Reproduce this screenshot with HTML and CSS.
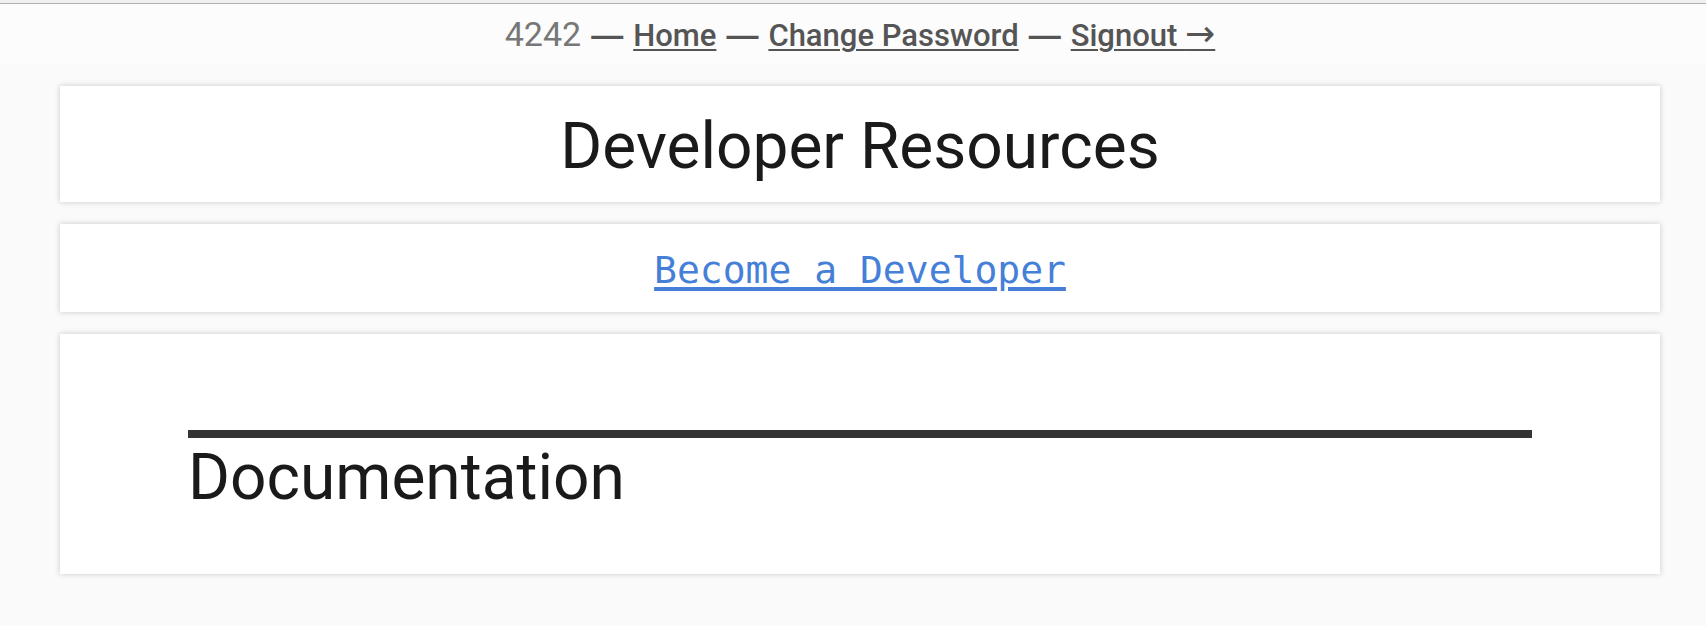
FILE: index.html
```html
<!DOCTYPE html>
<html lang="en">
<head>
<meta charset="utf-8">
<title>Developer Resources</title>
<link rel="stylesheet" href="styles.css">
</head>
<body>
<nav class="topbar">
  <span class="account">4242</span>
  <span class="dash">—</span>
  <a href="#">Home</a>
  <span class="dash">—</span>
  <a href="#">Change Password</a>
  <span class="dash">—</span>
  <a href="#">Signout <span class="arrow">→</span></a>
</nav>
<main class="page">
  <header class="card title-card">
    <h1 class="heading">Developer Resources</h1>
  </header>
  <section class="card action-card">
    <a class="cta" href="#">Become a Developer</a>
  </section>
  <section class="card docs-card">
    <h2 class="heading docs-heading">Documentation</h2>
  </section>
</main>
</body>
</html>
```
FILE: styles.css
```css
* { box-sizing: border-box; }
body {
  margin: 0;
  background: #fafafa;
  color: #1a1a1a;
  font-family: Roboto, "Liberation Sans", sans-serif;
}
.topbar {
  position: relative;
  display: flex;
  flex-wrap: wrap;
  align-items: baseline;
  justify-content: center;
  gap: 0 10px;
  padding: 1px 0 0 14px;
  border-top: 4px solid #b2b2b2;
  background: #fcfcfc;
  color: #555;
  font-size: 31px;
  font-weight: 500;
  line-height: 58px;
}
.topbar::before {
  content: "";
  position: absolute;
  top: -4px;
  left: 0;
  right: 0;
  height: 3px;
  background: #f0f0f0;
}
.topbar a {
  color: #555;
  text-decoration-thickness: 2px;
  text-underline-offset: 3px;
}
.account {
  color: #777;
  font-size: 34px;
  font-weight: 400;
}
.dash {
  font-family: "Liberation Sans", sans-serif;
  font-size: 32px;
  font-weight: 700;
  line-height: 1;
}
.arrow {
  font-family: "DejaVu Sans", sans-serif;
  font-size: 36px;
  line-height: 1;
}
.page {
  display: flex;
  flex-direction: column;
  gap: 22px;
  padding: 21px 46px 52px 60px;
}
.card {
  background: #fff;
  box-shadow: 0 0 6px rgba(0, 0, 0, 0.2);
}
.title-card {
  padding: 23px 22px 17px;
  text-align: center;
}
.heading {
  margin: 0;
  font-size: 64px;
  font-weight: 400;
  line-height: 76px;
}
.action-card {
  display: flex;
  justify-content: center;
  padding: 18px 16px 14px;
}
.cta {
  color: #457fd8;
  font-family: "DejaVu Sans Mono", monospace;
  font-size: 38px;
  line-height: 56px;
  text-decoration-thickness: 4px;
  text-underline-offset: 4px;
}
.docs-card {
  padding: 96px 128px 56px;
}
.docs-heading {
  border-top: 8px solid #333;
  line-height: 80px;
}
```
